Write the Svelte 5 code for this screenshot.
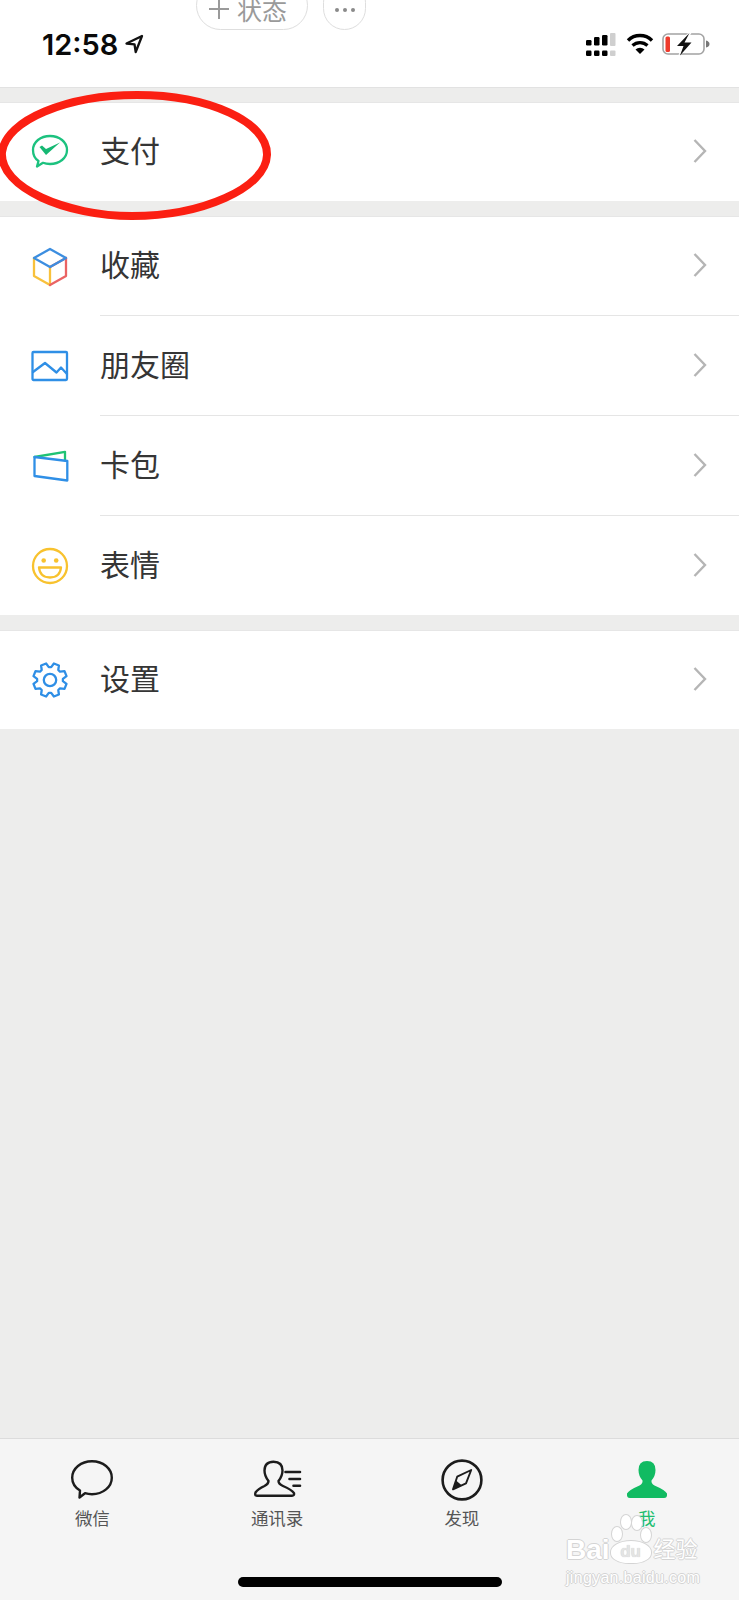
<script>
	const groups = [
		[{ key: 'pay', label: '支付' }],
		[
			{ key: 'cube', label: '收藏' },
			{ key: 'photo', label: '朋友圈' },
			{ key: 'card', label: '卡包' },
			{ key: 'smile', label: '表情' }
		],
		[{ key: 'gear', label: '设置' }]
	];

	const tabs = [
		{ key: 'chat', label: '微信' },
		{ key: 'contacts', label: '通讯录' },
		{ key: 'find', label: '发现' },
		{ key: 'me', label: '我', active: true }
	];

	// 8 tooth gear outline, rounded off by the stroke join
	function gearPath() {
		const pts = [];
		for (let i = 0; i < 8; i++) {
			const a = (i * Math.PI) / 4 + Math.PI / 8;
			for (const [off, r] of [[-0.3, 13], [-0.16, 17], [0.16, 17], [0.3, 13]]) {
				pts.push(
					(20 + r * Math.cos(a + off)).toFixed(1) + ' ' + (20 + r * Math.sin(a + off)).toFixed(1)
				);
			}
		}
		return 'M' + pts.join('L') + 'Z';
	}
</script>

<main>
	<header>
		<div class="pills">
			<div class="pill status"><span class="plus"></span><span class="st">状态</span></div>
			<div class="pill more"><i></i><i></i><i></i></div>
		</div>
		<div class="statusbar">
			<span class="time">12:58</span>
			<svg class="loc" width="20" height="20" viewBox="0 0 20 20">
				<path d="M18 2 2.500 9.500l8 .8 1.200 7.700z" fill="none" stroke="#111" stroke-width="2.300" stroke-linejoin="round" />
			</svg>
			<span class="grow"></span>
			<svg width="30" height="24" viewBox="0 0 30 24">
				<g fill="#000">
					<rect x="0" y="8" width="5.500" height="5.500" rx="1.200" />
					<rect x="8" y="5" width="5.500" height="8.500" rx="1.200" />
					<rect x="16" y="3" width="5.500" height="10.500" rx="1.200" />
					<rect x="0" y="18.500" width="5.500" height="5.500" rx="1.200" />
					<rect x="8" y="18.500" width="5.500" height="5.500" rx="1.200" />
					<rect x="16" y="18.500" width="5.500" height="5.500" rx="1.200" />
				</g>
				<rect x="24" y="1" width="5.500" height="13" rx="1" fill="#cfcfcf" />
				<rect x="24" y="18.500" width="5.500" height="5.500" rx="1" fill="#cfcfcf" />
			</svg>
			<svg class="wifi" width="28" height="22" viewBox="0 0 28 22">
				<path d="M2 7.500a17 17 0 0 1 24 0" fill="none" stroke="#000" stroke-width="3.400" />
				<path d="M6.500 12.500a11 11 0 0 1 15 0" fill="none" stroke="#000" stroke-width="3.200" />
				<path d="M9.500 16.500 14 21l4.500-4.500a6.500 6.500 0 0 0-9 0z" fill="#000" />
			</svg>
			<svg class="batt" width="48" height="24" viewBox="0 0 48 24">
				<rect x="1" y="2" width="41" height="20" rx="5" fill="none" stroke="#a3a3a3" stroke-width="1.600" />
				<path d="M44 8.500q3.500 1 3.500 3.500T44 15.500z" fill="#777" />
				<rect x="3.500" y="4.500" width="4.500" height="15.500" rx="1.500" fill="#ee3b2c" />
				<path d="M27 0 13 15h6.500L16 24.500 31 9h-6.500L30 0z" fill="#fff" />
				<path d="M27.500 1 15 14h6.500L18 23.500 29.500 10.500H22.500L27.500 1z" fill="#111" />
			</svg>
		</div>
	</header>

	{#each groups as group}
		<section>
			{#each group as item, i}
				<div class="row">
					<svg class="icon" width="40" height="40" viewBox="0 0 40 40" fill="none" stroke-width="2.300" stroke-linejoin="round" stroke-linecap="round">
						{#if item.key === 'pay'}
							<path d="M7 34.500 8.500 29C4.500 26.500 3 22.500 3 18 3 10 10.500 4 20 4s17 6 17 14-7.500 14-17 14c-2.500 0-5-.4-7-1.200z" stroke="#1cc27f" />
							<path d="M9.500 15 12 13.500 16 17 30 10.500 16 23z" fill="#16b873" stroke="none" />
						{:else if item.key === 'cube'}
							<path d="M4 11v18l16 9V20" stroke="#f8c13c" />
							<path d="M36 11v18l-16 9" stroke="#ea6363" />
							<path d="M36 11 20 20" stroke="#ea6363" />
							<path d="M20 2 36 11 20 20 4 11z" stroke="#3c8ee0" />
						{:else if item.key === 'photo'}
							<rect x="2.500" y="6" width="34.500" height="28" rx="1" stroke="#2f8fe6" />
							<path d="M3 26 15 17l11.500 9.500L31 21.500 37 28" stroke="#2f8fe6" />
						{:else if item.key === 'card'}
							<path d="M4.500 11 35 5.800V14" stroke="#1fc374" />
							<path d="M4.500 11 37.300 15V34.500L4.500 30z" stroke="#2f8fe6" />
						{:else if item.key === 'smile'}
							<circle cx="20" cy="20" r="17" stroke="#f8c22e" />
							<circle cx="13.700" cy="14.500" r="2.300" fill="#f8c22e" stroke="none" />
							<circle cx="26.200" cy="14.500" r="2.300" fill="#f8c22e" stroke="none" />
							<path d="M9 21.500H31Q30 31.500 20 31.500T9 21.500z" stroke="#f8c22e" />
						{:else}
							<path d={gearPath()} stroke="#2f8fe6" />
							<circle cx="20" cy="20" r="6.200" stroke="#2f8fe6" />
						{/if}
					</svg>
					<div class="body" class:line={i < group.length - 1}>
						<span class="label">{item.label}</span>
						<svg class="chev" width="14" height="26" viewBox="0 0 14 26">
							<path d="M1.500 2 12 13 1.500 24" fill="none" stroke="#b5b5b5" stroke-width="2.400" />
						</svg>
					</div>
				</div>
			{/each}
		</section>
	{/each}

	<div class="grow"></div>

	<nav>
		{#each tabs as tab}
			<div class="tab" class:active={tab.active}>
				<svg width="52" height="44" viewBox="0 0 52 44" fill="none" stroke="#1c1c1c" stroke-width="2.400" stroke-linejoin="round" stroke-linecap="round">
					{#if tab.key === 'chat'}
						<path d="M13.500 39.500 14 32.500C9 29.500 6.200 25 6.200 19.700 6.200 10.500 15 3.200 26 3.200s19.800 7.300 19.800 16.500S37 36.200 26 36.200c-2.500 0-4.800-.3-7-1z" />
					{:else if tab.key === 'contacts'}
						<path d="M6 37.700H41Q43.500 37.700 43 35.200 41 32 32 28 27.500 26 27.500 23 31.500 18 31.500 12.500 31.500 3.700 22.500 3.700T13.500 12.500Q13.500 18 17.500 23 17.500 26 13.500 28 7 31 4.500 34.500 3.500 37.700 6 37.700z" />
						<path d="M34.500 14H49M38.500 21H49M42.500 27.700H49" stroke-width="2.600" />
					{:else if tab.key === 'find'}
						<circle cx="26" cy="22" r="19.400" stroke-width="2.600" />
						<path d="M35.200 12 30 25.300 17 31.300 21.200 18.700z" stroke-width="1.900" />
						<path d="M26 27.500 17 31.300 20 22.500z" fill="#1c1c1c" stroke="none" />
					{:else}
						<path d="M9 40H43Q46.500 40 46 35.500 44 32 33.500 27.500 30 25.500 30.500 22.500 34.500 18 34.500 12 34.500 3 26 3T17.500 12Q17.500 18 21.500 22.500 22 25.500 18.500 27.500 8 32 6 35.500 5.500 40 9 40z" fill="#11bb62" stroke="none" />
					{/if}
				</svg>
				<span>{tab.label}</span>
			</div>
		{/each}
		<div class="homebar"></div>
	</nav>

	<!-- hand drawn red circle over the first row -->
	<svg class="scribble" width="280" height="134" viewBox="0 0 280 134" fill="none">
		<path d="M5 62C9 30 70 5 140 5 212 5 271 32 270 65 269 98 205 126 135 126 70 126 2 98 5 62z" stroke="#fb1f12" stroke-width="8" />
	</svg>

	<!-- watermark -->
	<div class="mark">
		<div class="mark-top">
			<span>Bai</span>
			<span class="paw">
				<i class="t1"></i><i class="t2"></i><i class="t3"></i><i class="t4"></i>
				<b>du</b>
			</span>
			<span class="cn">经验</span>
		</div>
		<div class="mark-url">jingyan.baidu.com</div>
	</div>
</main>

<style>
	:global(body) {
		margin: 0;
	}
	main {
		position: relative;
		height: 1600px;
		overflow: hidden;
		display: flex;
		flex-direction: column;
		background: #ededec;
		font-family: 'Noto Sans CJK SC', 'Noto Sans', sans-serif;
	}
	header {
		position: relative;
		background: #fff;
		border-bottom: 1px solid #e2e2e2;
		box-sizing: border-box;
		flex: none;
		height: 88px;
	}
	.pills {
		position: absolute;
		top: -19px;
		left: 196px;
		display: flex;
		gap: 15px;
	}
	.pill {
		height: 49px;
		border: 1px solid #dedede;
		border-radius: 25px;
		box-sizing: border-box;
		display: flex;
		color: #9a9a9a;
		font-size: 25px;
	}
	.status {
		width: 112px;
		padding: 18px 0 0 12px;
		gap: 8px;
		line-height: 25px;
	}
	.st {
		margin-top: -3px;
	}
	/* the plus is two thin CSS bars, cut by the top of the screen */
	.plus {
		position: relative;
		width: 20px;
		height: 20px;
		flex: none;
		margin-top: -1px;
		background:
			linear-gradient(#9a9a9a, #9a9a9a) center / 20px 2px no-repeat,
			linear-gradient(#9a9a9a, #9a9a9a) center / 2px 20px no-repeat;
	}
	.more {
		width: 43px;
		gap: 4px;
		padding-top: 26px;
		justify-content: center;
		align-items: flex-start;
	}
	.more i {
		width: 4px;
		height: 4px;
		border-radius: 50%;
		background: #8a8a8a;
	}
	.statusbar {
		display: flex;
		align-items: center;
		height: 88px;
		padding: 0 30px 0 42px;
		box-sizing: border-box;
	}
	.time {
		font-family: Inter, sans-serif;
		font-weight: 600;
		font-size: 29px;
		color: #0a0a0a;
	}
	.loc {
		margin-left: 6px;
	}
	.wifi {
		margin-left: 10px;
	}
	.batt {
		margin-left: 8px;
		margin-right: -1px;
	}
	.grow {
		flex: 1;
	}
	section {
		margin-top: 15px;
		background: #fff;
		border-top: 1px solid #e6e6e6;
		flex: none;
	}
	section:first-of-type {
		margin-top: 14px;
	}
	.row {
		display: flex;
		align-items: center;
		height: 98px;
		padding-left: 30px;
	}
	.row:has(.line) {
		height: 100px;
	}
	.row:first-child:has(.line) {
		height: 99px;
	}
	.row:last-child:not(:first-child) {
		height: 99px;
	}
	.icon {
		flex: none;
		margin-right: 30px;
	}
	.body {
		flex: 1;
		height: 100%;
		display: flex;
		align-items: center;
		justify-content: space-between;
		padding-right: 32px;
		box-sizing: border-box;
	}
	.line {
		border-bottom: 1px solid #e5e5e5;
	}
	.label {
		font-size: 30px;
		color: #353535;
		line-height: 1;
		margin-bottom: 6px;
	}
	.chev {
		margin-bottom: 2px;
	}
	nav {
		position: relative;
		flex: none;
		height: 162px;
		box-sizing: border-box;
		border-top: 1px solid #dcdcdc;
		background: #f5f5f5;
		display: grid;
		grid-template-columns: repeat(4, 1fr);
		padding-top: 19px;
		align-items: start;
	}
	.tab {
		display: flex;
		flex-direction: column;
		align-items: center;
		font-size: 17.500px;
		color: #555;
		line-height: 24px;
		gap: 4px;
	}
	.tab.active {
		color: #1fbe70;
	}
	.homebar {
		position: absolute;
		left: 238px;
		top: 138px;
		width: 264px;
		height: 10px;
		border-radius: 5px;
		background: #000;
	}
	.scribble {
		position: absolute;
		left: -3px;
		top: 90px;
	}
	.mark {
		position: absolute;
		left: 566px;
		top: 1522px;
		width: 140px;
		color: #fff;
		font-family: 'Liberation Sans', 'Noto Sans CJK SC', sans-serif;
		text-shadow:
			1px 0 0 #d4d4d4,
			-1px 0 0 #d4d4d4,
			0 1px 0 #d4d4d4,
			0 -1px 0 #d4d4d4;
	}
	.mark-top {
		display: flex;
		align-items: flex-end;
		height: 42px;
		font-size: 28px;
		font-weight: 700;
		line-height: 28px;
	}
	.paw {
		position: relative;
		width: 42px;
		height: 24px;
		flex: none;
		background: #fff;
		border: 1px solid #d4d4d4;
		border-radius: 50% 50% 45% 45%;
		box-sizing: border-box;
		margin-right: 1px;
		text-align: center;
	}
	.paw b {
		display: block;
		font-size: 17px;
		line-height: 22px;
		color: #e4e4e4;
		text-shadow:
			0 0 1px #c4c4c4;
	}
	.paw i {
		position: absolute;
		background: #fff;
		border: 1px solid #d4d4d4;
		border-radius: 50%;
		box-sizing: border-box;
	}
	.t1 {
		left: 0;
		top: -15px;
		width: 12px;
		height: 16px;
	}
	.t2 {
		left: 9px;
		top: -27px;
		width: 12px;
		height: 16px;
	}
	.t3 {
		left: 20px;
		top: -26px;
		width: 12px;
		height: 16px;
	}
	.t4 {
		left: 29px;
		top: -14px;
		width: 12px;
		height: 16px;
	}
	.cn {
		font-size: 22px;
		font-weight: 400;
		margin-left: 1px;
	}
	.mark-url {
		margin-top: 5px;
		font-size: 16px;
		line-height: 18px;
		letter-spacing: 0.300px;
	}
</style>
